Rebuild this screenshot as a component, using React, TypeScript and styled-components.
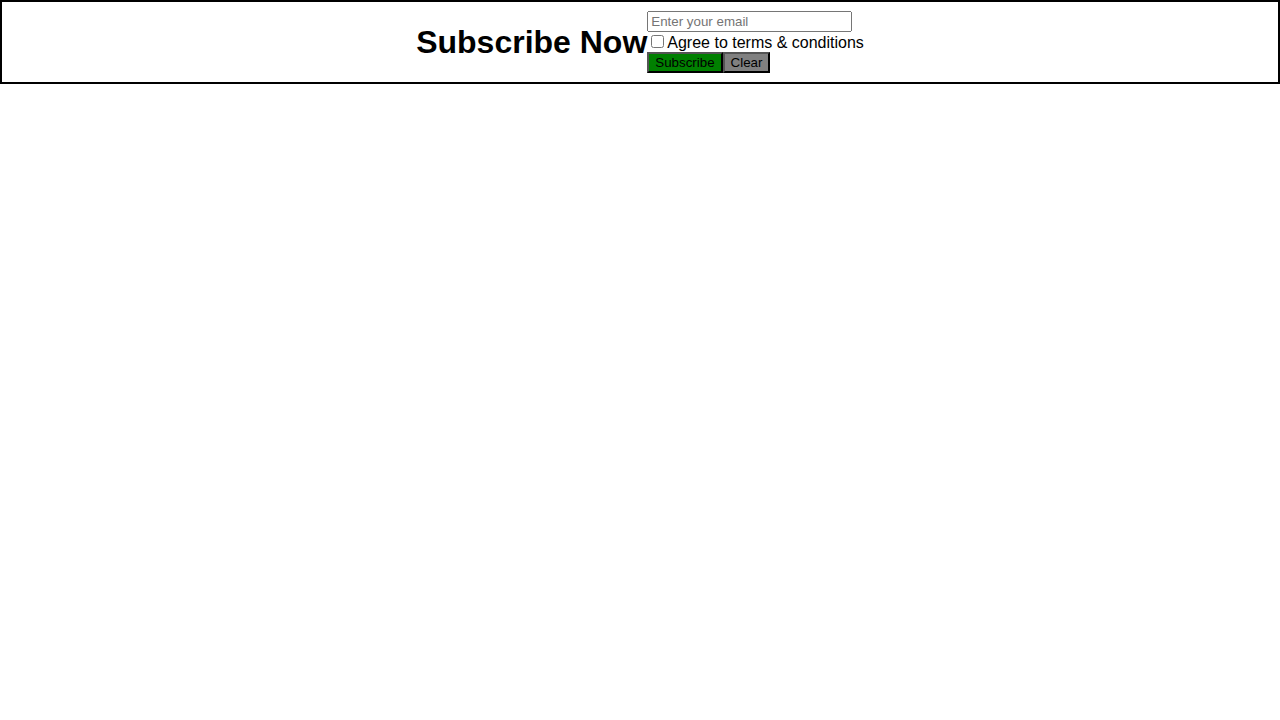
import React from "react";
import styled, { createGlobalStyle } from "styled-components";

const GlobalStyle = createGlobalStyle`
  body {
    margin: 0;
    font-family: "Liberation Sans", Arial, sans-serif;
  }
`;

const Banner = styled.div`
  display: flex;
  justify-content: center;
  align-items: center;
  height: 84px;
  box-sizing: border-box;
  border: 2px solid #000;
`;

const Title = styled.h2`
  margin: 0;
  font-size: 32px;
  font-weight: bold;
`;

const Form = styled.form`
  display: flex;
  flex-direction: column;
  align-items: flex-start;
`;

const EmailInput = styled.input`
  width: 205px;
  height: 21px;
  box-sizing: border-box;
  font-family: "Liberation Sans", Arial, sans-serif;
  font-size: 13.333px;
`;

const Terms = styled.label`
  display: block;
  font-size: 16px;
  line-height: 19px;
`;

const Buttons = styled.div`
  display: flex;
`;

const Button = styled.button<{ $bg: string }>`
  font-family: "Liberation Sans", Arial, sans-serif;
  font-size: 13.333px;
  background: ${p => p.$bg};
  border: 2px outset #000;
  padding: 1px 6px;
  color: #000;
`;

export default function App() {
	return (
		<>
			<GlobalStyle />
			<Banner>
				<Title>Subscribe Now</Title>
				<Form onSubmit={e => e.preventDefault()}>
					<EmailInput type="email" placeholder="Enter your email" />
					<Terms>
						<input type="checkbox" />
						Agree to terms &amp; conditions
					</Terms>
					<Buttons>
						<Button type="submit" $bg="green">Subscribe</Button>
						<Button type="reset" $bg="gray">Clear</Button>
					</Buttons>
				</Form>
			</Banner>
		</>
	);
}
